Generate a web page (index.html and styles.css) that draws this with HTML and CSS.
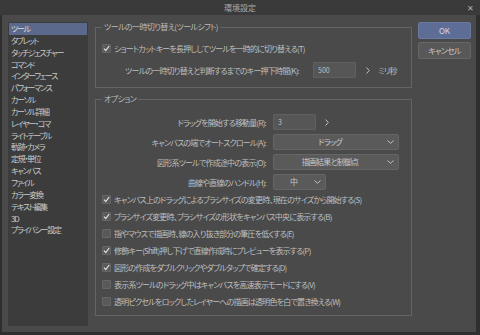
FILE: index.html
```html
<!DOCTYPE html>
<html lang="ja">
<head>
  <meta charset="UTF-8">
  <title>環境設定</title>
  <link rel="stylesheet" href="styles.css">
</head>
<body>
  <div class="window">
    <div class="titlebar">
      <span class="title">環境設定</span>
      <span class="close">✕</span>
    </div>

    <div class="dialog">
      <ul class="categories">
        <li class="selected">ツール</li>
        <li>タブレット</li>
        <li>タッチジェスチャー</li>
        <li>コマンド</li>
        <li>インターフェース</li>
        <li>パフォーマンス</li>
        <li>カーソル</li>
        <li>カーソル詳細</li>
        <li>レイヤー・コマ</li>
        <li>ライトテーブル</li>
        <li>軌跡・カメラ</li>
        <li>定規・単位</li>
        <li>キャンバス</li>
        <li>ファイル</li>
        <li>カラー変換</li>
        <li>テキスト編集</li>
        <li>3D</li>
        <li>プライバシー設定</li>
      </ul>

      <div class="panel">
        <!-- tool shift -->
        <fieldset class="group group-shift">
          <legend>ツールの一時切り替え(ツールシフト)</legend>
          <label class="check"><span class="box checked"></span>ショートカットキーを長押ししてツールを一時的に切り替える(T)</label>
          <div class="hold-row">
            <span class="hold-label">ツールの一時切り替えと判断するまでのキー押下時間(K):</span>
            <span class="field field-short">500</span>
            <span class="arrow"></span>
            <span class="unit">ミリ秒</span>
          </div>
        </fieldset>

        <!-- options -->
        <fieldset class="group group-options">
          <legend>オプション</legend>
          <div class="form-grid">
            <span class="form-label">ドラッグを開始する移動量(R):</span>
            <span class="control">
              <span class="field field-short">3</span>
              <span class="arrow"></span>
            </span>

            <span class="form-label">キャンバスの端でオートスクロール(A):</span>
            <span class="select select-wide">ドラッグ</span>

            <span class="form-label">図形系ツールで作成途中の表示(O):</span>
            <span class="select select-wide">描画結果と制御点</span>

            <span class="form-label">曲線や直線のハンドル(H):</span>
            <span class="select select-small">中</span>
          </div>

          <div class="checks">
            <label class="check"><span class="box checked"></span>キャンバス上のドラッグによるブラシサイズの変更時、現在のサイズから開始する(S)</label>
            <label class="check"><span class="box checked"></span>ブラシサイズ変更時、ブラシサイズの形状をキャンバス中央に表示する(B)</label>
            <label class="check"><span class="box"></span>指やマウスで描画時、線の入り抜き部分の筆圧を低くする(E)</label>
            <label class="check"><span class="box checked"></span>修飾キー(Shift)押し下げで直線作成時にプレビューを表示する(P)</label>
            <label class="check"><span class="box checked"></span>図形の作成をダブルクリックやダブルタップで確定する(D)</label>
            <label class="check"><span class="box"></span>表示系ツールのドラッグ中はキャンバスを高速表示モードにする(V)</label>
            <label class="check"><span class="box"></span>透明ピクセルをロックしたレイヤーへの描画は透明色を白で置き換える(W)</label>
          </div>
        </fieldset>
      </div>

      <div class="actions">
        <button class="btn btn-primary">OK</button>
        <button class="btn">キャンセル</button>
      </div>
    </div>
  </div>
</body>
</html>
```

FILE: styles.css
```css
body {
  margin: 0;
  padding: 0;
  overflow: hidden;
  font-family: "Noto Sans CJK JP", "Noto Sans", sans-serif;
  font-size: 8px;
  font-feature-settings: "palt";
  letter-spacing: -0.8px;
  color: #bfbfbf;
}

.window {
  width: 480px;
  height: 335px;
  background-color: #2f2f2f;
  display: flex;
  flex-direction: column;
}

.titlebar {
  height: 15px;
  background-color: #3a3a3a;
  display: grid;
  grid-template-columns: 1fr auto 1fr;
  align-items: center;
}

.title {
  grid-column: 2;
  color: #a8a8a8;
  letter-spacing: 0;
}

.close {
  grid-column: 3;
  justify-self: end;
  margin-right: 6px;
  font-size: 8px;
  letter-spacing: 0;
  color: #b0b0b0;
}

.dialog {
  height: 317px;
  margin: 0 4px 0 2px;
  padding: 7px 5px 6px 6px;
  box-sizing: border-box;
  background-color: #4a4a4a;
  display: flex;
}

/* category list */
.categories {
  list-style: none;
  margin: 0;
  padding: 1px 1px;
  width: 80px;
  box-sizing: border-box;
  background-color: #3c3c3c;
  color: #cacaca;
  letter-spacing: -1.3px;
}

.categories li {
  line-height: 11.85px;
  padding-left: 2px;
  white-space: nowrap;
}

.categories li.selected {
  background-color: #5b6a8c;
  color: #dcdcdc;
}

/* groups */
.panel {
  width: 317px;
  margin-left: 7px;
}

.group {
  margin: 0;
  padding: 0 0 0 6px;
  border: 1px solid #646464;
  min-width: 0;
}

.group legend {
  margin-left: 0;
  padding: 0 2px;
  line-height: 10px;
  color: #bababa;
  letter-spacing: -0.6px;
}

.group-shift {
  padding-top: 10px;
  padding-bottom: 9px;
}

.group-options {
  margin-top: 6px;
  padding-top: 10px;
  padding-bottom: 5px;
}

.check {
  display: flex;
  align-items: center;
  height: 12px;
  white-space: nowrap;
}

.box {
  width: 9px;
  height: 9px;
  box-sizing: border-box;
  margin-right: 3px;
  border: 1px solid #666;
  border-radius: 1px;
  background-color: #595959;
  flex: none;
}

.box.checked {
  background: #595959 url("data:image/svg+xml;utf8,<svg xmlns='http://www.w3.org/2000/svg' width='7' height='7' viewBox='0 0 7 7'><polyline points='1,3.6 2.8,5.6 6.2,1' fill='none' stroke='%23e4e4e4' stroke-width='1.2'/></svg>") center / 7px 7px no-repeat;
}

.hold-row {
  display: flex;
  align-items: center;
  height: 16px;
  margin-top: 8px;
}

.hold-label {
  width: 197px;
  text-align: right;
  white-space: nowrap;
}

.hold-row .field {
  margin-left: 14px;
}

.hold-row .arrow {
  margin-left: 10px;
}

.unit {
  margin-left: 8px;
}

.field {
  width: 43px;
  height: 16px;
  box-sizing: border-box;
  padding-left: 4px;
  border: 1px solid #606060;
  border-radius: 1px;
  background-color: #565656;
  color: #c0c0c0;
  font-size: 7px;
  letter-spacing: 0;
  line-height: 14px;
}

.arrow {
  width: 4px;
  height: 7px;
  background: url("data:image/svg+xml;utf8,<svg xmlns='http://www.w3.org/2000/svg' width='4' height='7' viewBox='0 0 4 7'><polyline points='0.5,0.5 3.3,3.5 0.5,6.5' fill='none' stroke='%23c0c0c0' stroke-width='1'/></svg>") no-repeat;
}

.form-grid {
  display: grid;
  grid-template-columns: 164px auto;
  column-gap: 7px;
  row-gap: 4px;
  align-items: center;
}

.form-label {
  text-align: right;
  white-space: nowrap;
}

.control {
  display: flex;
  align-items: center;
  gap: 9px;
}

.select {
  height: 16px;
  box-sizing: border-box;
  border: 1px solid #666;
  border-radius: 2px;
  background: #5a5a5a url("data:image/svg+xml;utf8,<svg xmlns='http://www.w3.org/2000/svg' width='7' height='4' viewBox='0 0 7 4'><polyline points='0.5,0.5 3.5,3.3 6.5,0.5' fill='none' stroke='%23c0c0c0' stroke-width='1'/></svg>") right 4px center / 7px 4px no-repeat;
  padding-right: 12px;
  line-height: 14px;
  text-align: center;
  color: #c8c8c8;
}

.select-wide {
  width: 126px;
}

.select-small {
  width: 53px;
}

.checks {
  margin-top: 1px;
}

.checks .check {
  height: 17px;
}

/* buttons */
.actions {
  width: 53px;
  margin-left: 6px;
  display: flex;
  flex-direction: column;
  gap: 3px;
}

.btn {
  height: 17px;
  margin: 0;
  padding: 0;
  border: 1px solid #666;
  border-radius: 2px;
  background-color: #585858;
  color: #c4c4c4;
  font: inherit;
  font-feature-settings: "palt";
  letter-spacing: -0.8px;
}

.btn-primary {
  background-color: #5e6d96;
  border-color: #6a79a2;
  color: #d4d9e6;
  letter-spacing: 0;
}
```
